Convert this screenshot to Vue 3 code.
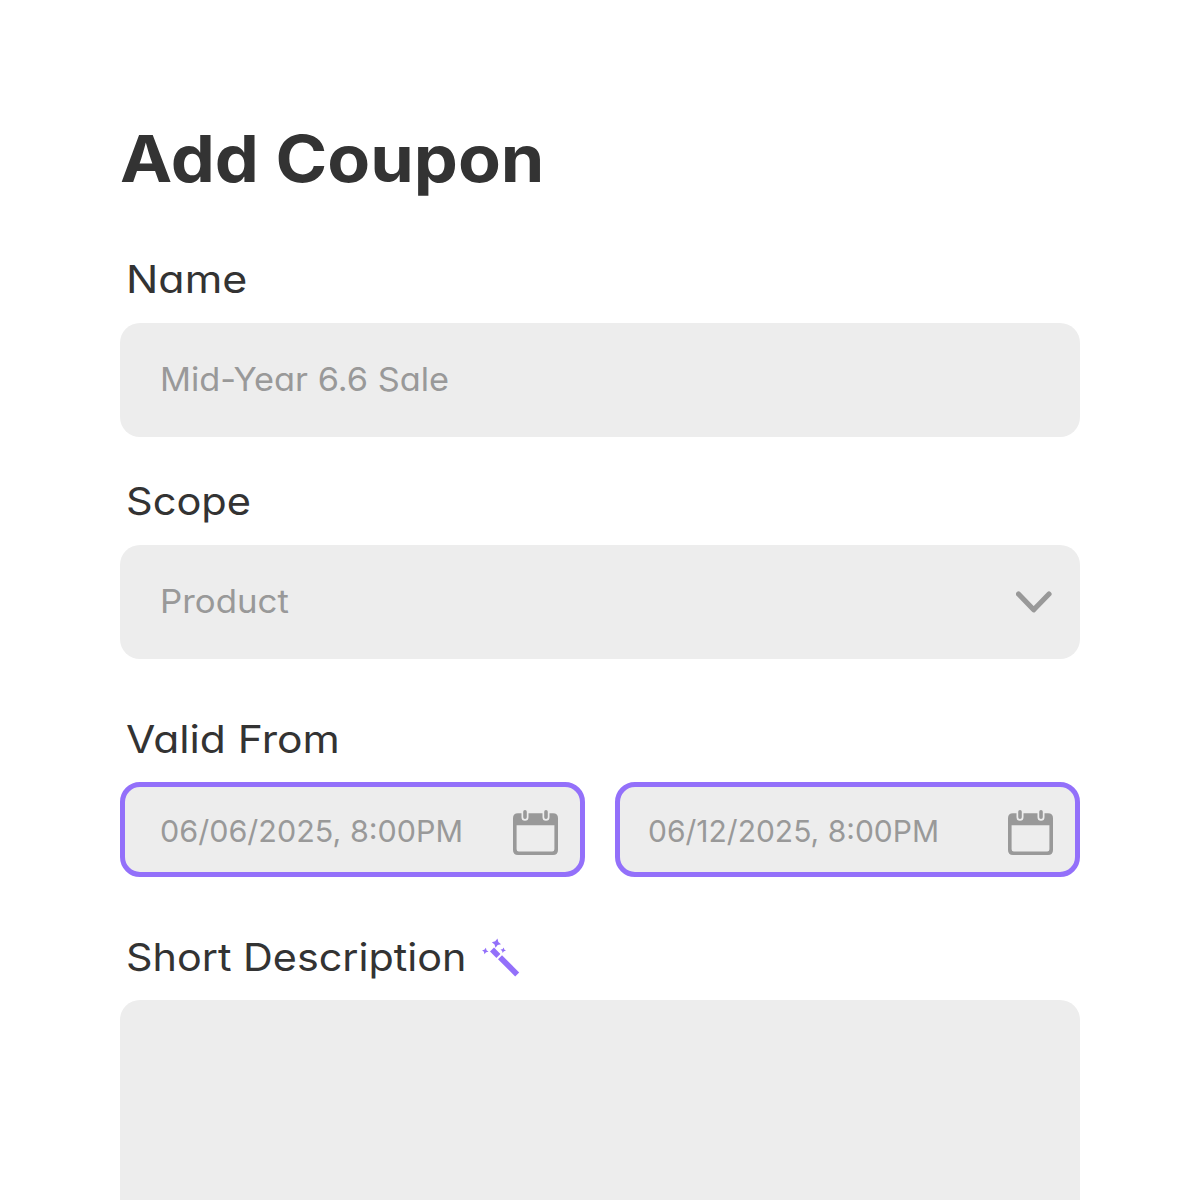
<script setup>
import { ref } from "vue";

const name = ref("Mid-Year 6.6 Sale");
const scope = ref("Product");
const dates = ref([
  { key: "start", value: "06/06/2025, 8:00PM" },
  { key: "end", value: "06/12/2025, 8:00PM" },
]);
</script>

<template>
  <main class="page">
    <h1 class="title"><span class="wide">Add Coupon</span></h1>

    <section class="field">
      <div class="label"><span class="wide label-name">Name</span></div>
      <div class="box">
        <span class="wide value value-name">{{ name }}</span>
      </div>
    </section>

    <section class="field field-scope">
      <div class="label"><span class="wide label-scope">Scope</span></div>
      <div class="box">
        <span class="wide value value-scope">{{ scope }}</span>
        <svg class="chevron" viewBox="0 0 36 22" width="36" height="22">
          <path d="M2.5 3 L17.7 18.8 L33 3" />
        </svg>
      </div>
    </section>

    <section class="field field-dates">
      <div class="label"><span class="wide label-valid">Valid From</span></div>
      <div class="dates">
        <div v-for="d in dates" :key="d.key" class="box date" :class="d.key">
          <span class="wide value">{{ d.value }}</span>
          <svg class="calendar" viewBox="0 0 45 45" width="45" height="45">
            <path
              class="body"
              fill-rule="evenodd"
              d="M5 3.3H40Q45 3.3 45 8.3V40Q45 45 40 45H5Q0 45 0 40V8.3Q0 3.3 5 3.3ZM3.6 15.3V39.2Q3.6 41.4 5.8 41.4H39.2Q41.4 41.4 41.4 39.2V15.3Z"
            />
            <path class="ring-gap" d="M12 1.8V7.2M33 1.8V7.2" />
            <path class="ring" d="M12 1.8V7.2M33 1.8V7.2" />
          </svg>
        </div>
      </div>
    </section>

    <section class="field field-desc">
      <div class="label">
        <span class="wide label-desc">Short Description</span>
        <svg class="wand" viewBox="0 0 38 40" width="38" height="40">
          <path d="M14.5 0.4L16.1 3.6L19.2 5.2L16.1 6.8L14.5 9.8L12.9 6.8L9.8 5.2L12.9 3.6Z" transform="rotate(12 14.5 5)" />
          <path d="M3.2 9.6L4.3 11.9L6.6 13L4.3 14.1L3.2 16.4L2.1 14.1L0 13L2.1 11.9Z" transform="rotate(12 3.2 13)" />
          <path d="M21.2 9.5L22.1 11.3L24 12.2L22.1 13.1L21.2 15L20.3 13.1L18.4 12.2L20.3 11.3Z" transform="rotate(12 21.2 12.2)" />
          <path d="M8 13.6L12 9.6L18.4 16L14.4 20Z" />
          <path d="M16 21.2L20 17.2L37.2 34.6L33.2 38.6Z" />
        </svg>
      </div>
      <div class="box textarea"></div>
    </section>
  </main>
</template>

<style>
body {
  margin: 0;
  background: #fff;
}
</style>

<style scoped>
.page {
  box-sizing: border-box;
  height: 1200px;
  padding: 119px 120px 0;
  overflow: hidden;
  color: #333;
  font-family: Inter, "Open Sans", sans-serif;
  /* single-storey a */
  font-feature-settings: "cv11";
}

.wide {
  display: inline-block;
  transform: scaleX(var(--stretch, 1));
  transform-origin: left center;
  white-space: nowrap;
}

.title {
  --stretch: 1.077;
  margin: 0 0 55px;
  font-size: 65px;
  line-height: 80px;
  font-weight: 700;
}

.field-scope {
  margin-top: 39px;
}

.field-dates,
.field-desc {
  margin-top: 55px;
}

.label {
  display: flex;
  align-items: center;
  height: 50px;
  margin-bottom: 19px;
  padding-left: 6px;
  font-size: 38.5px;
  line-height: 50px;
}

.field-dates .label,
.field-desc .label {
  margin-bottom: 18px;
}

.label-name {
  --stretch: 1.115;
}

.label-scope {
  --stretch: 1.08;
}

.label-valid {
  --stretch: 1.105;
}

.label-desc {
  --stretch: 1.073;
  width: 356px;
}

.wand {
  margin-top: 1px;
  fill: #9370fa;
}

.box {
  box-sizing: border-box;
  display: flex;
  align-items: center;
  justify-content: space-between;
  height: 114px;
  padding: 0 28px 3px 40px;
  border-radius: 20px;
  background: #ededed;
  color: #999;
  font-size: 33px;
}

.value-name {
  --stretch: 1.04;
}

.value-scope {
  --stretch: 1.055;
}

.dates {
  display: flex;
  gap: 30px;
}

.date {
  flex: none;
  width: 465px;
  height: 95px;
  padding: 3px 22px 0 35px;
  border: 5px solid #9370fa;
  font-size: 30px;
}

.start {
  --stretch: 1.017;
}

.end {
  padding-left: 28px;
}

.textarea {
  height: 240px;
}

.chevron {
  margin-top: 2px;
}

.chevron path {
  fill: none;
  stroke: #999;
  stroke-width: 5.2;
  stroke-linecap: round;
  stroke-linejoin: round;
}

.calendar {
  margin-top: 3px;
}

.calendar .body {
  fill: #999;
}

.ring-gap,
.ring {
  fill: none;
  stroke: #ededed;
  stroke-width: 7;
  stroke-linecap: round;
}

.ring {
  stroke: #999;
  stroke-width: 3.6;
}
</style>
